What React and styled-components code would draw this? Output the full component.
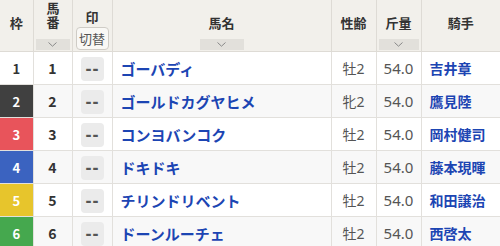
import React from "react";
import styled, { createGlobalStyle } from "styled-components";

const Global = createGlobalStyle`
  html, body { margin: 0; padding: 0; background: #fff; }
  body { font-family: "Noto Sans CJK JP", "Noto Sans", sans-serif; }
`;

const Table = styled.table`
  width: 500px;
  border-collapse: collapse;
  table-layout: fixed;
  font-family: "Noto Sans CJK JP", "Noto Sans", sans-serif;
`;

const Th = styled.th`
  background: #f2f0eb;
  border-left: 1px solid #dedbd5;
  border-bottom: 1px solid #dedbd5;
  height: 51px;
  padding: 0;
  vertical-align: top;
  color: #333;
  font-size: 13px;
  font-weight: 700;
  &:first-child { border-left: none; }
`;

const Head = styled.div`
  height: 51px;
  box-sizing: border-box;
  display: grid;
  grid-template-rows: 1fr ${(p) => p.$bottom || 12}px;
  padding: ${(p) => p.$top ?? 7}px 2px 1px;
  justify-items: center;
`;

const Label = styled.div`
  align-self: center;
  line-height: 16px;
  text-align: center;
`;

const VLabel = styled.div`
  align-self: start;
  margin-top: 2px;
  writing-mode: vertical-rl;
  text-orientation: upright;
  letter-spacing: 1px;
  line-height: 16px;
`;

const Filter = styled.div`
  width: ${(p) => p.$w || "100%"};
  height: 11px;
  background: #e2e0db;
  display: flex;
  align-items: center;
  justify-content: center;
  align-self: end;
`;

const Toggle = styled.button`
  width: 33px;
  height: 23px;
  box-sizing: border-box;
  border: 1px solid #cfccc6;
  border-radius: 4px;
  background: #f9f8f5;
  color: #555;
  font-family: "Noto Sans CJK JP", sans-serif;
  font-size: 13px;
  padding: 0;
  line-height: 21px;
`;

const Tr = styled.tr`
  background: ${(p) => (p.$alt ? "#f8f8f8" : "#fff")};
`;

const Td = styled.td`
  height: 32px;
  padding: 0;
  border-left: 1px solid #e2e0dc;
  border-bottom: 1px solid #e2e0dc;
  text-align: ${(p) => p.$align || "center"};
  vertical-align: middle;
  &:first-child { border-left: none; }
`;

const Gate = styled(Td)`
  background: ${(p) => p.$bg};
  color: ${(p) => p.$fg};
  font-size: 13px;
  font-weight: 700;
`;

const Num = styled(Td)`
  color: #333;
  font-size: 14px;
  font-weight: 700;
`;

const Mark = styled.span`
  display: inline-flex;
  align-items: center;
  justify-content: center;
  width: 23px;
  height: 24px;
  border-radius: 4px;
  background: #ebebeb;
  color: #555;
  font-family: "Liberation Sans", Arial, sans-serif;
  font-size: 18px;
  font-weight: 700;
  letter-spacing: 1px;
  text-indent: 1px;
  line-height: 24px;
`;

const Name = styled(Td)`
  padding-left: 8px;
  color: #1c45b3;
  font-size: 15px;
  font-weight: 700;
  white-space: nowrap;
  overflow: hidden;
`;

const Plain = styled(Td)`
  color: #555;
  font-size: ${(p) => p.$size || 14}px;
  font-family: "Noto Sans", "Noto Sans CJK JP", sans-serif;
`;

const Jockey = styled(Td)`
  padding-left: 8px;
  color: #1c45b3;
  font-size: 14px;
  font-weight: 700;
`;

const Chevron = () => (
  <svg width="9" height="5" viewBox="0 0 9 5">
    <path d="M0.5 0.5 L4.5 4.2 L8.5 0.5" fill="none" stroke="#888" strokeWidth="1" />
  </svg>
);

const gates = {
  1: ["#fff", "#333"],
  2: ["#404040", "#fff"],
  3: ["#e8545b", "#fff"],
  4: ["#3b63c0", "#fff"],
  5: ["#e7c52c", "#fff"],
  6: ["#45a84e", "#fff"],
};

const rows = [
  { n: 1, name: "ゴーバディ", sex: "牡2", w: "54.0", j: "吉井章" },
  { n: 2, name: "ゴールドカグヤヒメ", sex: "牝2", w: "54.0", j: "鷹見陸" },
  { n: 3, name: "コンヨバンコク", sex: "牡2", w: "54.0", j: "岡村健司" },
  { n: 4, name: "ドキドキ", sex: "牡2", w: "54.0", j: "藤本現暉" },
  { n: 5, name: "チリンドリベント", sex: "牡2", w: "54.0", j: "和田譲治" },
  { n: 6, name: "ドーンルーチェ", sex: "牡2", w: "54.0", j: "西啓太" },
];

export default function App() {
  return (
    <>
      <Global />
      <Table>
        <colgroup>
          <col style={{ width: 33 }} />
          <col style={{ width: 39 }} />
          <col style={{ width: 40 }} />
          <col style={{ width: 219 }} />
          <col style={{ width: 45 }} />
          <col style={{ width: 45 }} />
          <col style={{ width: 79 }} />
        </colgroup>
        <thead>
          <tr>
            <Th>
              <Head><Label>枠</Label></Head>
            </Th>
            <Th>
              <Head $top={0}>
                <VLabel>馬番</VLabel>
                <Filter><Chevron /></Filter>
              </Head>
            </Th>
            <Th>
              <Head $bottom={23} $top={6}>
                <Label>印</Label>
                <Toggle>切替</Toggle>
              </Head>
            </Th>
            <Th>
              <Head>
                <Label>馬名</Label>
                <Filter $w="44px"><Chevron /></Filter>
              </Head>
            </Th>
            <Th>
              <Head><Label>性齢</Label></Head>
            </Th>
            <Th>
              <Head>
                <Label>斤量</Label>
                <Filter><Chevron /></Filter>
              </Head>
            </Th>
            <Th>
              <Head><Label>騎手</Label></Head>
            </Th>
          </tr>
        </thead>
        <tbody>
          {rows.map((r, i) => (
            <Tr key={r.n} $alt={i % 2 === 1}>
              <Gate $bg={gates[r.n][0]} $fg={gates[r.n][1]}>{r.n}</Gate>
              <Num>{r.n}</Num>
              <Td><Mark>--</Mark></Td>
              <Name $align="left">{r.name}</Name>
              <Plain>{r.sex}</Plain>
              <Plain $size={15}>{r.w}</Plain>
              <Jockey $align="left">{r.j}</Jockey>
            </Tr>
          ))}
        </tbody>
      </Table>
    </>
  );
}
